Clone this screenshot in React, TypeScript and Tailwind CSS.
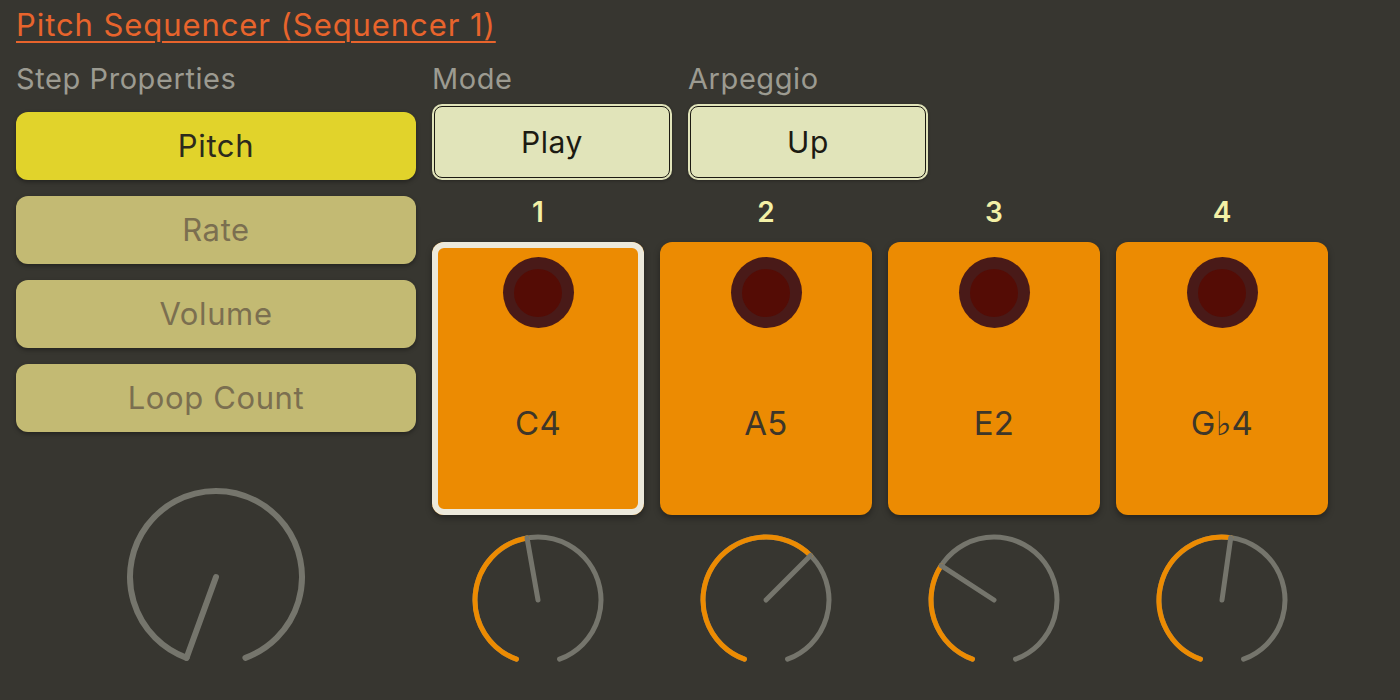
import React from 'react';

const FONT = { fontFamily: "Inter, 'Noto Sans', 'DejaVu Sans', sans-serif" };

type Step = { n: number; note: string; angle: number; selected?: boolean };

const STEPS: Step[] = [
  { n: 1, note: 'C4', angle: -10, selected: true },
  { n: 2, note: 'A5', angle: 45 },
  { n: 3, note: 'E2', angle: -57 },
  { n: 4, note: 'G\u266D4', angle: 8 },
];

const START = -160;
const END = 160;

function pt(cx: number, cy: number, r: number, deg: number) {
  const a = (deg * Math.PI) / 180;
  return [cx + r * Math.sin(a), cy - r * Math.cos(a)];
}

function arc(cx: number, cy: number, r: number, from: number, to: number) {
  const [x1, y1] = pt(cx, cy, r, from);
  const [x2, y2] = pt(cx, cy, r, to);
  const large = to - from > 180 ? 1 : 0;
  return `M ${x1} ${y1} A ${r} ${r} 0 ${large} 1 ${x2} ${y2}`;
}

function Knob({ size, r, stroke, angle }: { size: number; r: number; stroke: number; angle: number }) {
  const c = size / 2;
  const [ix, iy] = pt(c, c, r, angle);
  return (
    <svg width={size} height={size} viewBox={`0 0 ${size} ${size}`} className="block">
      <path d={arc(c, c, r, START, END)} fill="none" stroke="#75756c" strokeWidth={stroke} strokeLinecap="round" />
      {angle > START && (
        <path d={arc(c, c, r, START, angle)} fill="none" stroke="#ec8b02" strokeWidth={stroke} strokeLinecap="round" />
      )}
      <line x1={c} y1={c} x2={ix} y2={iy} stroke="#75756c" strokeWidth={stroke} strokeLinecap="round" />
    </svg>
  );
}

function PropButton({ label, active }: { label: string; active?: boolean }) {
  return (
    <div
      className={
        active
          ? 'flex h-[68px] items-center justify-center rounded-[12px] bg-[#e1d32b] text-[31px] tracking-[0.02em] text-[#2c2a1d] shadow-[0_2px_4px_rgba(0,0,0,0.35)]'
          : 'flex h-[68px] items-center justify-center rounded-[12px] bg-[#c3ba73] text-[31px] tracking-[0.02em] text-[#7b6f50] shadow-[0_2px_4px_rgba(0,0,0,0.35)]'
      }
    >
      {label}
    </div>
  );
}

function Selector({ label, value }: { label: string; value: string }) {
  return (
    <div className="flex w-[240px] flex-col">
      <div className="h-[36px] text-[29px] leading-[36px] tracking-[0.02em] text-[#9c9b91]">{label}</div>
      <div className="mt-[7px] h-[76px] rounded-[10px] bg-[#e1e4ba] p-[2px] shadow-[0_1px_3px_rgba(0,0,0,0.3)]">
        <div className="flex h-full items-center justify-center rounded-[8px] border border-[#1c1a12] text-[30px] tracking-[0.02em] text-[#1c1a12]">
          {value}
        </div>
      </div>
    </div>
  );
}

function Pad({ step }: { step: Step }) {
  return (
    <div className="flex w-[212px] flex-col items-center">
      <div className="mt-[16px] h-[32px] text-[28px] font-semibold leading-[32px] text-[#f3f0a6]">{step.n}</div>
      <div
        className={
          step.selected
            ? 'mt-[14px] flex h-[273px] w-[212px] flex-col items-center rounded-[12px] bg-[#ec8b02] shadow-[0_3px_6px_rgba(0,0,0,0.35)] ring-[6px] ring-inset ring-[#ece9db]'
            : 'mt-[14px] flex h-[273px] w-[212px] flex-col items-center rounded-[12px] bg-[#ec8b02] shadow-[0_3px_6px_rgba(0,0,0,0.35)]'
        }
      >
        <div className="mt-[15px] flex h-[71px] w-[71px] items-center justify-center rounded-full bg-[#491a18]">
          <div className="h-[48px] w-[48px] rounded-full bg-[#540c05]" />
        </div>
        <div className="mt-[75px] text-[33px] leading-[40px] tracking-[0.01em] text-[#3d3629]">{step.note}</div>
      </div>
      <div className="mt-[15px]">
        <Knob size={140} r={63} stroke={5} angle={step.angle} />
      </div>
    </div>
  );
}

export default function App() {
  return (
    <div className="h-[700px] w-[1400px] overflow-hidden bg-[#373630] pl-4 pt-[5px]" style={FONT}>
      <div className="h-[40px] text-[31px] leading-[40px] tracking-[0.03em] text-[#e8642c] underline decoration-2 underline-offset-[5px]">
        Pitch Sequencer (Sequencer 1)
      </div>
      <div className="mt-[16px] flex gap-4">
        <div className="flex w-[400px] flex-col">
          <div className="h-[36px] text-[29px] leading-[36px] tracking-[0.02em] text-[#9c9b91]">Step Properties</div>
          <div className="mt-[15px] flex flex-col gap-4">
            <PropButton label="Pitch" active />
            <PropButton label="Rate" />
            <PropButton label="Volume" />
            <PropButton label="Loop Count" />
          </div>
          <div className="mx-auto mt-[45px]">
            <Knob size={200} r={86} stroke={6} angle={START} />
          </div>
        </div>
        <div className="flex flex-col">
          <div className="flex gap-4">
            <Selector label="Mode" value="Play" />
            <Selector label="Arpeggio" value="Up" />
          </div>
          <div className="flex gap-4">
            {STEPS.map((s) => (
              <Pad key={s.n} step={s} />
            ))}
          </div>
        </div>
      </div>
    </div>
  );
}
